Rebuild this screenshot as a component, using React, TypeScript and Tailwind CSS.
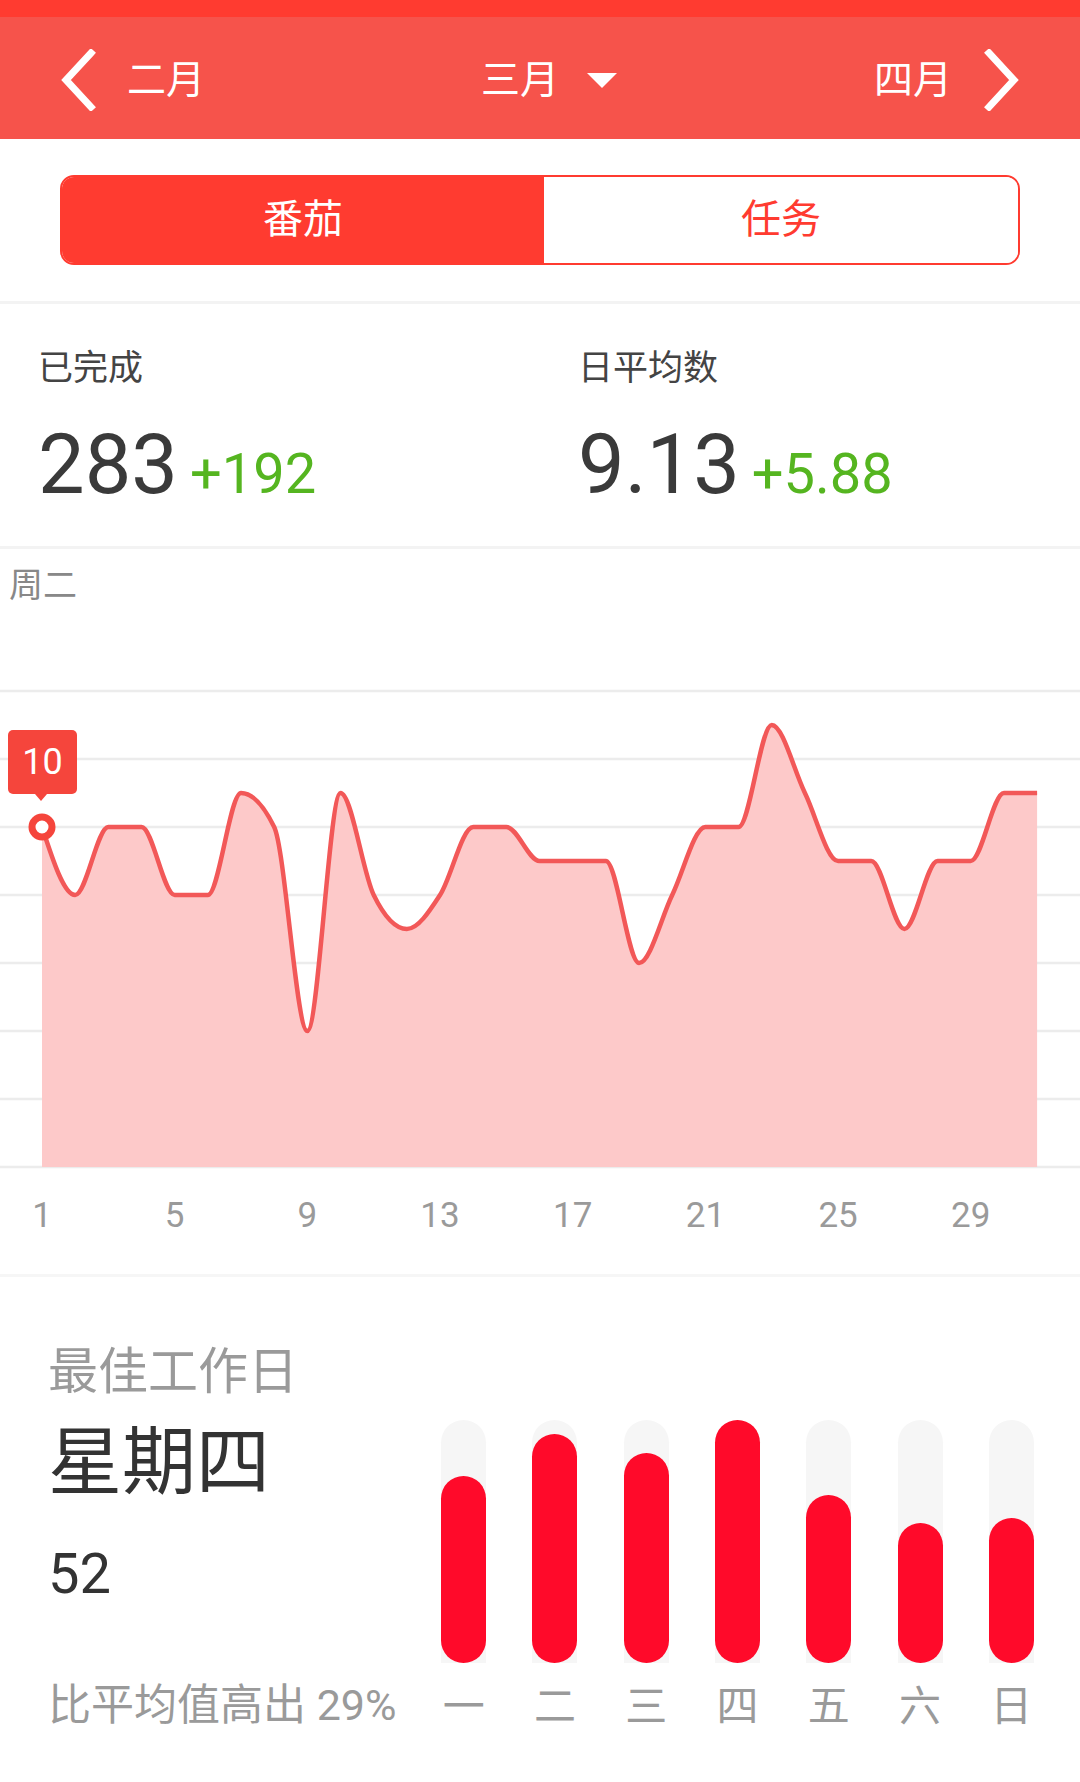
import React from "react";

const daily = [10, 8, 10, 10, 8, 8, 11, 10, 4, 11, 8, 7, 8, 10, 10, 9, 9, 9, 6, 8, 10, 10, 13, 11, 9, 9, 7, 9, 9, 11, 11];
const weekdays = [
  { label: "一", value: 40 },
  { label: "二", value: 49 },
  { label: "三", value: 45 },
  { label: "四", value: 52 },
  { label: "五", value: 36 },
  { label: "六", value: 30 },
  { label: "日", value: 31 },
];

// chart geometry (svg sits at page y 600)
const X0 = 42;
const STEP = 33.17;
const BASE = 565;
const UNIT = 34;
const px = (i: number) => X0 + i * STEP;
const py = (v: number) => BASE - v * UNIT;

function monotonePath(pts: [number, number][]) {
  const n = pts.length;
  const s: number[] = [];
  for (let i = 0; i < n - 1; i++) s.push((pts[i + 1][1] - pts[i][1]) / (pts[i + 1][0] - pts[i][0]));
  const t: number[] = new Array(n).fill(0);
  for (let i = 1; i < n - 1; i++) {
    const s0 = s[i - 1];
    const s1 = s[i];
    if (s0 * s1 <= 0) {
      t[i] = 0;
    } else {
      const p = (s0 + s1) / 2;
      t[i] = (Math.sign(s0) + Math.sign(s1)) * Math.min(Math.abs(s0), Math.abs(s1), 0.5 * Math.abs(p));
    }
  }
  t[0] = (3 * s[0] - t[1]) / 2;
  t[n - 1] = (3 * s[n - 2] - t[n - 2]) / 2;
  let d = `M${pts[0][0]},${pts[0][1]}`;
  for (let i = 0; i < n - 1; i++) {
    const h = pts[i + 1][0] - pts[i][0];
    d += ` C${pts[i][0] + h / 3},${pts[i][1] + (t[i] * h) / 3} ${pts[i + 1][0] - h / 3},${pts[i + 1][1] - (t[i + 1] * h) / 3} ${pts[i + 1][0]},${pts[i + 1][1]}`;
  }
  return d;
}

function Chevron({ dir }: { dir: "left" | "right" }) {
  return (
    <svg width="36" height="62" viewBox="0 0 36 62" fill="none">
      <path
        d={dir === "left" ? "M31 4 L6 31 L31 58" : "M5 4 L30 31 L5 58"}
        stroke="white"
        strokeWidth="7"
        strokeLinecap="square"
      />
    </svg>
  );
}

function Header() {
  return (
    <div className="bg-[#ff3b30]">
      <div className="h-[17px]" />
      <div className="h-[122px] bg-[#f6534b] flex items-center px-[60px] pt-1 text-white text-[39px] leading-none">
        <div className="flex items-center">
          <Chevron dir="left" />
          <span className="ml-[31px]">二月</span>
        </div>
        <div className="flex items-center ml-[276px]">
          <span>三月</span>
          <svg className="ml-[28px]" width="30" height="15" viewBox="0 0 30 15">
            <path d="M0 0 H30 L15 15 Z" fill="white" />
          </svg>
        </div>
        <div className="flex items-center ml-auto">
          <span className="mr-[32px]">四月</span>
          <Chevron dir="right" />
        </div>
      </div>
    </div>
  );
}

function Segmented() {
  return (
    <div className="px-[60px] pt-[36px] pb-[36px]">
      <div className="flex h-[90px] rounded-[14px] border-2 border-[#ff3b30] overflow-hidden text-[40px]">
        <div className="w-[482px] bg-[#ff3b30] text-white flex items-center justify-center">番茄</div>
        <div className="flex-1 bg-white text-[#ff3b30] flex items-center justify-center">任务</div>
      </div>
    </div>
  );
}

function Stat({ label, value, delta }: { label: string; value: string; delta: string }) {
  return (
    <div className="flex-1 pl-[38px]">
      <div className="text-[35px] leading-[40px] text-[#444]">{label}</div>
      <div className="flex items-baseline mt-[34px]">
        <span className="text-[83px] leading-[84px] text-[#3a3a3a]">{value}</span>
        <span className="ml-[12px] text-[56px] leading-[60px] text-[#55b520]">{delta}</span>
      </div>
    </div>
  );
}

function LineChart() {
  const pts: [number, number][] = daily.map((v, i) => [px(i), py(v)]);
  const line = monotonePath(pts);
  const area = `${line} L${px(30)},${BASE} L${px(0)},${BASE} Z`;
  const grid = [0, 1, 2, 3, 4, 5, 6, 7].map((k) => BASE - k * 68);
  const ticks = [1, 5, 9, 13, 17, 21, 25, 29];
  return (
    <div className="relative h-[725px]">
      <div className="pl-[9px] pt-[16px] text-[34px] leading-[40px] text-[#888]">周二</div>
      <svg className="absolute left-0 top-[53px]" width="1080" height="640" viewBox="0 0 1080 640">
        {grid.map((y) => (
          <line key={y} x1="0" x2="1080" y1={y} y2={y} stroke="#ececec" strokeWidth="2.5" />
        ))}
        <path d={area} fill="#fdc9c9" />
        <path d={line} fill="none" stroke="#f25858" strokeWidth="4.5" strokeLinejoin="round" />
        <path d="M35 192 L41 199 L47 192 Z" fill="#f5453c" />
        <circle cx={px(0)} cy={py(10)} r="10" fill="white" stroke="#f5453c" strokeWidth="7" />
        {ticks.map((d) => (
          <text
            key={d}
            x={px(d - 1)}
            y={625}
            textAnchor="middle"
            fontSize="35"
            fill="#9a9a9a"
            fontFamily="Roboto, 'Noto Sans CJK SC', sans-serif"
          >
            {d}
          </text>
        ))}
      </svg>
      <div className="absolute left-[8px] top-[181px] w-[69px] h-[64px] rounded-[5px] bg-[#f5453c] text-white text-[36px] flex items-center justify-center">
        10
      </div>
    </div>
  );
}

function BestDay() {
  const max = Math.max(...weekdays.map((w) => w.value));
  return (
    <div className="flex pl-[48px] pb-[52px]">
      <div className="w-[370px] pt-[66px] flex flex-col">
        <div className="text-[50px] leading-[58px] text-[#9a9a9a]">最佳工作日</div>
        <div className="mt-[22px] text-[74px] leading-[80px] text-[#333]">星期四</div>
        <div className="mt-[39px] text-[56px] leading-[64px] text-[#333]">52</div>
        <div className="mt-[75px] text-[43px] leading-[48px] text-[#9a9a9a] whitespace-nowrap">比平均值高出 29%</div>
      </div>
      <div className="w-[639px] pt-[143px]">
        <div className="flex h-[243px]">
          {weekdays.map((w) => (
            <div key={w.label} className="flex-1 flex justify-center">
              <div className="w-[45px] h-full rounded-t-full bg-[#f6f6f6] flex flex-col justify-end">
                <div className="w-full rounded-full bg-[#ff0a2a]" style={{ height: `${(w.value / max) * 100}%` }} />
              </div>
            </div>
          ))}
        </div>
        <div className="flex mt-[20px]">
          {weekdays.map((w) => (
            <div key={w.label} className="flex-1 text-center text-[42px] leading-[48px] text-[#9a9a9a]">
              {w.label}
            </div>
          ))}
        </div>
      </div>
    </div>
  );
}

export default function App() {
  return (
    <div className="w-[1080px] h-[1782px] bg-white overflow-hidden font-[Roboto,'Noto_Sans_CJK_SC',sans-serif]">
      <Header />
      <Segmented />
      <div className="h-[3px] bg-[#f3f3f3]" />
      <div className="flex h-[242px] pt-[45px]">
        <Stat label="已完成" value="283" delta="+192" />
        <Stat label="日平均数" value="9.13" delta="+5.88" />
      </div>
      <div className="h-[3px] bg-[#f3f3f3]" />
      <LineChart />
      <div className="h-[3px] bg-[#f6f6f6]" />
      <BestDay />
    </div>
  );
}
